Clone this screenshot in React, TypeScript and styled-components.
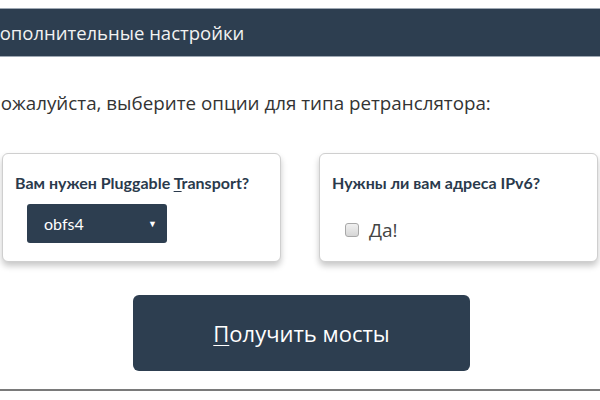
import styled, { createGlobalStyle } from 'styled-components'

const GlobalStyle = createGlobalStyle`
  html, body {
    margin: 0;
    padding: 0;
    background: #fff;
    overflow: hidden;
  }
  body {
    font-family: "Open Sans", "Liberation Sans", Arial, sans-serif;
  }
`

const Page = styled.main`
  margin-left: -13px;
  padding-top: 8px;
  width: 640px;
`

const SectionBar = styled.h2`
  background-color: #2d3e50;
  border-top: 1px solid #9ea8b3;
  border-bottom: 1px solid #9ea8b3;
  box-sizing: border-box;
  color: #f2f2f2;
  font-size: 18.5px;
  font-weight: normal;
  height: 49px;
  line-height: 47px;
  margin: 0;
  padding: 0;
`

const Intro = styled.p`
  color: #333;
  font-size: 18.8px;
  line-height: 24px;
  margin: 34px 0 0;
`

const Options = styled.div`
  display: flex;
  flex-direction: column;
  align-items: center;
  margin-top: 38px;
  width: 626px;
`

const CardRow = styled.div`
  display: flex;
  gap: 38px;
  padding-left: 15px;
  align-self: stretch;
`

const Card = styled.section`
  background: #fff;
  border: 1px solid #cfcfcf;
  border-radius: 6px;
  box-shadow: 0 4px 6px rgba(0, 0, 0, 0.22);
  box-sizing: border-box;
  height: 109px;
  padding: 18px 12px 0;
  width: 279px;
`

const CardTitle = styled.h4`
  color: #2a3a4c;
  font-family: Lato, "Noto Sans", sans-serif;
  font-size: 16px;
  font-weight: bold;
  line-height: 22px;
  margin: 0;

  u {
    text-decoration-thickness: 1px;
    text-underline-offset: 2px;
  }
`

const Select = styled.div`
  align-items: center;
  background: #2d3e50;
  border-radius: 3px;
  box-sizing: border-box;
  color: #fff;
  display: flex;
  font-family: Lato, "Noto Sans", sans-serif;
  font-size: 16px;
  height: 39px;
  justify-content: space-between;
  margin: 10px 0 0 12px;
  padding: 0 10px 0 17px;
  width: 140px;

  span {
    font-size: 9px;
  }
`

const CheckRow = styled.label`
  align-items: center;
  color: #444;
  display: flex;
  font-size: 19px;
  gap: 10px;
  margin: 23px 0 0 13px;
`

const Check = styled.input`
  appearance: none;
  background: linear-gradient(#f0f0f0, #d6d6d6);
  border: 1px solid #a8a8a8;
  border-radius: 3px;
  box-sizing: border-box;
  height: 14px;
  margin: 0;
  width: 14px;
`

const GetBridges = styled.button`
  background: #2d3e50;
  border: none;
  border-radius: 6px;
  color: #fff;
  font-family: "Open Sans", "Liberation Sans", Arial, sans-serif;
  font-size: 22px;
  height: 76px;
  margin: 33px 0 0 3px;
  width: 337px;

  u {
    text-decoration-thickness: 1px;
    text-underline-offset: 3px;
  }
`

const Rule = styled.hr`
  border: none;
  border-top: 2px solid #7a7a7a;
  margin: 18px 0 0;
`

export default function App() {
  return (
    <>
      <GlobalStyle />
      <Page>
        <SectionBar>Дополнительные настройки</SectionBar>
        <Intro>Пожалуйста, выберите опции для типа ретранслятора:</Intro>
        <Options>
          <CardRow>
            <Card>
              <CardTitle>
                Вам нужен Pluggable <u>T</u>ransport?
              </CardTitle>
              <Select>
                obfs4 <span>▼</span>
              </Select>
            </Card>
            <Card>
              <CardTitle>Нужны ли вам адреса IPv6?</CardTitle>
              <CheckRow>
                <Check type="checkbox" />
                Да!
              </CheckRow>
            </Card>
          </CardRow>
          <GetBridges>
            <u>П</u>олучить мосты
          </GetBridges>
        </Options>
        <Rule />
      </Page>
    </>
  )
}
